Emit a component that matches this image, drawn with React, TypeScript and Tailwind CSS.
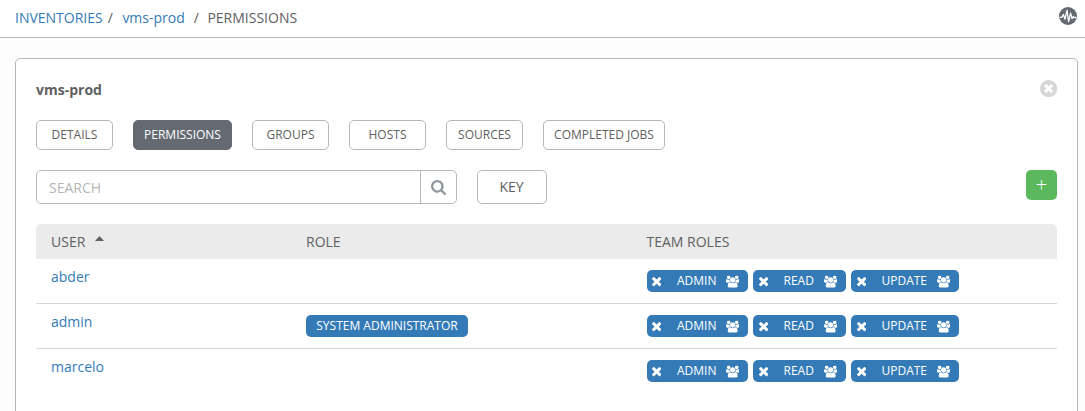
import React from 'react';

const TIMES =
  'M1490 1322q0 40-28 68l-136 136q-28 28-68 28t-68-28l-294-294-294 294q-28 28-68 28t-68-28l-136-136q-28-28-28-68t28-68l294-294-294-294q-28-28-28-68t28-68l136-136q28-28 68-28t68 28l294 294 294-294q28-28 68-28t68 28l136 136q28 28 28 68t-28 68l-294 294 294 294q28 28 28 68z';
const TIMES_CIRCLE =
  'M1277 1122q0-26-19-45l-181-181 181-181q19-19 19-45 0-27-19-46l-90-90q-19-19-46-19-26 0-45 19l-181 181-181-181q-19-19-45-19-27 0-46 19l-90 90q-19 19-19 46 0 26 19 45l181 181-181 181q-19 19-19 45 0 27 19 46l90 90q19 19 46 19 26 0 45-19l181-181 181 181q19 19 45 19 27 0 46-19l90-90q19-19 19-46zm387-226q0 209-103 385.5t-279.5 279.5-385.5 103-385.5-103-279.5-279.5-103-385.5 103-385.5 279.5-279.5 385.5-103 385.5 103 279.5 279.5 103 385.5z';
const SEARCH =
  'M1216 832q0-185-131.5-316.5t-316.5-131.5-316.5 131.5-131.5 316.5 131.5 316.5 316.5 131.5 316.5-131.5 131.5-316.5zm512 832q0 52-38 90t-90 38q-54 0-90-38l-343-342q-179 124-399 124-143 0-273.5-55.5t-225-150-150-225-55.5-273.5 55.5-273.5 150-225 225-150 273.5-55.5 273.5 55.5 225 150 150 225 55.5 273.5q0 220-124 399l343 343q37 37 37 90z';
const USERS =
  'M529 896q-162 5-265 128h-134q-82 0-138-40.5t-56-118.5q0-353 124-353 6 0 43.5 21t97.5 42.5 119 21.5q67 0 133-23-5 37-5 66 0 139 81 256zm1071 637q0 120-73 189.5t-194 69.5h-874q-121 0-194-69.5t-73-189.5q0-53 3.5-103.5t14-109 26.5-108.5 43-97.5 62-81 85.5-53.5 111.5-20q10 0 43 21.5t73 48 107 48 135 21.5 135-21.5 107-48 73-48 43-21.5q61 0 111.5 20t85.5 53.5 62 81 43 97.5 26.5 108.5 14 109 3.5 103.5zm-1024-1277q0 106-75 181t-181 75-181-75-75-181 75-181 181-75 181 75 75 181zm704 384q0 159-112.5 271.5t-271.5 112.5-271.5-112.5-112.5-271.5 112.5-271.5 271.5-112.5 271.5 112.5 112.5 271.5zm576 225q0 78-56 118.5t-138 40.5h-134q-103-123-265-128 81-117 81-256 0-29-5-66 66 23 133 23 59 0 119-21.5t97.5-42.5 43.5-21q124 0 124 353zm-128-609q0 106-75 181t-181 75-181-75-75-181 75-181 181-75 181 75 75 181z';

function Icon({ d, box, className }: { d: string; box: string; className: string }) {
  return (
    <svg viewBox={box} fill="currentColor" className={className} aria-hidden="true">
      <path d={d} />
    </svg>
  );
}

const TABS = [
  { label: 'DETAILS', width: 'w-[77px]' },
  { label: 'PERMISSIONS', width: 'w-[99px]', active: true },
  { label: 'GROUPS', width: 'w-[77px]' },
  { label: 'HOSTS', width: 'w-[77px]' },
  { label: 'SOURCES', width: 'w-[77px]' },
  { label: 'COMPLETED JOBS', width: 'w-[122px]' },
];

const TEAM_ROLES = [
  { label: 'ADMIN', width: 'w-[101px]', inset: 'pl-[5px]' },
  { label: 'READ', width: 'w-[93px]', inset: 'pl-[5.5px]' },
  { label: 'UPDATE', width: 'w-[108px]', inset: 'pl-[5.5px]' },
];

const USERS_LIST = [
  { name: 'abder', role: '' },
  { name: 'admin', role: 'SYSTEM ADMINISTRATOR' },
  { name: 'marcelo', role: '' },
];

function TeamRole({ label, width, inset }: { label: string; width: string; inset: string }) {
  return (
    <span
      className={`flex h-[22px] shrink-0 items-center rounded-[5px] bg-[#337ab7] pr-[9px] text-xs text-white ${width} ${inset}`}
    >
      <Icon d={TIMES} box="302 366 1188 1188" className="mt-[2px] size-[9.3px] shrink-0" />
      <span className="ml-[15.7px] leading-[22px]">{label}</span>
      <Icon d={USERS} box="-64 0 1920 1792" className="mb-[0.5px] ml-auto h-[12.5px] w-[13.4px] shrink-0 translate-y-[0.5px]" />
    </span>
  );
}

export default function App() {
  return (
    <div className="flex h-[411px] w-full flex-col overflow-hidden bg-[#fcfcfc] font-['Open_Sans',sans-serif] text-sm text-[#606060]">
      <header className="flex h-[38px] shrink-0 items-center justify-between border-b border-[#b7b7b7] bg-white pl-[15px] pr-2 pb-px">
        <nav className="flex leading-5">
          <a className="text-[#337ab7]">INVENTORIES</a>
          <span className="ml-[5px]">/</span>
          <a className="ml-[9.5px] text-[#337ab7]">vms-prod</a>
          <span className="ml-[9px]">/</span>
          <span className="ml-[8.5px]">PERMISSIONS</span>
        </nav>
        <svg viewBox="0 0 18 18" className="mt-[-4px] size-[18px]" aria-hidden="true">
          <circle cx="9" cy="9" r="9" fill="#646972" />
          <path
            d="M0.7 10.3H2.9L4.4 7.5L6 12.2L8 3.4L9.6 14.6L11.6 6.2L13 11.6L14.2 9.6L15 10.5H17.3"
            fill="none"
            stroke="#fff"
            strokeWidth="1.3"
            strokeLinejoin="round"
          />
        </svg>
      </header>

      <main className="mt-5 ml-[15px] h-[400px] w-[1063px] shrink-0 rounded-[5px] border border-[#b7b7b7] bg-white px-5">
        <div className="flex h-[61px] items-center justify-between">
          <h1 className="text-sm font-bold">vms-prod</h1>
          <Icon d={TIMES_CIRCLE} box="128 128 1536 1536" className="mb-[2px] size-[17.2px] text-[#d7d7d7]" />
        </div>

        <div className="flex gap-5">
          {TABS.map((tab) => (
            <button
              key={tab.label}
              className={`h-[30px] rounded-[5px] border pb-px text-xs whitespace-nowrap ${tab.width} ${
                tab.active ? 'border-[#646972] bg-[#646972] text-white' : 'border-[#b7b7b7] bg-white'
              }`}
            >
              {tab.label}
            </button>
          ))}
        </div>

        <div className="mt-5 flex h-[34px]">
          <div className="flex w-[421px] overflow-hidden rounded-[5px] border border-[#b7b7b7]">
            <span className="flex-1 pl-3 leading-[33px] text-[#b7b7b7]">SEARCH</span>
            <span className="flex w-[36px] items-center justify-center border-l border-[#b7b7b7] pr-px text-[#92979f]">
              <Icon d={SEARCH} box="64 128 1664 1664" className="size-[15px]" />
            </span>
          </div>
          <button className="ml-5 w-[70px] rounded-[5px] border border-[#b7b7b7] pr-px pb-px">KEY</button>
          <button className="ml-auto h-[30px] w-[31px] rounded-[5px] bg-[#5cb85c] text-xl leading-[30px] font-light text-white">
            +
          </button>
        </div>

        <div className="mt-5 grid h-[35px] grid-cols-[255px_340px_1fr] rounded-t-[5px] bg-[#ebebeb] pl-[15px] leading-[35px]">
          <span className="flex">
            USER
            <svg viewBox="0 0 9 5" className="mt-[12px] ml-[9.5px] h-[5px] w-[9px]" fill="currentColor" aria-hidden="true">
              <path d="M0 5L4.5 0L9 5Z" />
            </svg>
          </span>
          <span>ROLE</span>
          <span className="pl-[0.5px]">TEAM ROLES</span>
        </div>

        {USERS_LIST.map((user) => (
          <div
            key={user.name}
            className="grid h-[45px] grid-cols-[255px_340px_1fr] border-b border-[#d7d7d7] pl-[15px] last:border-b-0"
          >
            <a className="pt-2 leading-5 text-[#337ab7]">{user.name}</a>
            <div className="pt-[11px]">
              {user.role && (
                <span className="flex h-[22px] w-[162px] items-center justify-center rounded-[5px] bg-[#337ab7] text-xs text-white">
                  {user.role}
                </span>
              )}
            </div>
            <div className="flex gap-[5px] pt-[11px] pl-px">
              {TEAM_ROLES.map((role) => (
                <TeamRole key={role.label} {...role} />
              ))}
            </div>
          </div>
        ))}
      </main>
    </div>
  );
}
